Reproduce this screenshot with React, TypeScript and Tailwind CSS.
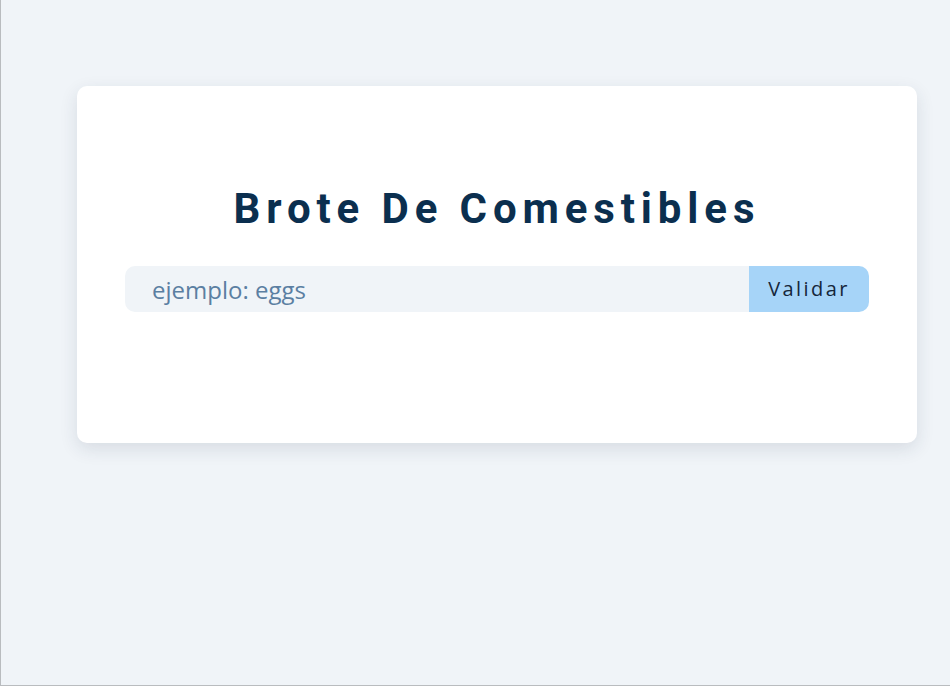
import React, { useState } from 'react'

export default function App() {
  const [food, setFood] = useState('')

  return (
    <div className="h-[686px] w-[950px] bg-[#f0f4f8] border-l border-b border-[#b9bcbf] pt-[86px] pl-[76px]">
      <div className="w-[840px] h-[357px] bg-white rounded-[10px] shadow-[0_6px_18px_rgba(30,50,70,0.12)] px-12 pt-[95px]">
        <h1 className="text-center font-['Roboto',sans-serif] font-bold text-[42px] leading-[56px] tracking-[0.14em] text-[#0b2f4f]">
          Brote De Comestibles
        </h1>
        <form onSubmit={(e) => e.preventDefault()} className="flex mt-[29px] h-[46px]">
          <input
            type="text"
            value={food}
            onChange={(e) => setFood(e.target.value)}
            placeholder="ejemplo: eggs"
            className="flex-grow h-full bg-[#f0f4f8] rounded-l-[10px] pl-[27px] font-['Open_Sans',sans-serif] text-[24px] text-[#1f3f5e] placeholder:text-[#5b7fa2] outline-none"
          />
          <button
            type="submit"
            className="w-[120px] h-full bg-[#a6d4f8] rounded-r-[10px] font-['Open_Sans',sans-serif] text-[20px] tracking-[0.12em] text-[#15263a]"
          >
            Validar
          </button>
        </form>
      </div>
    </div>
  )
}
